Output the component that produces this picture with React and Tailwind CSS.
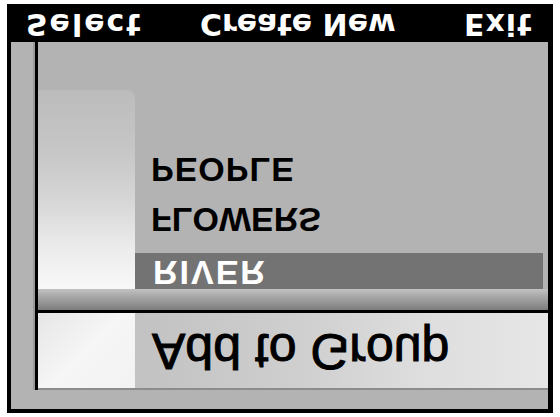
export default function App() {
  const flip = "[transform:scaleY(-1)] inline-block leading-none";
  return (
    <div className="w-[560px] h-[417px] bg-white py-[4px] px-[7px]">
      <div className="w-full h-full bg-black flex flex-col pl-[4px] pr-[5px] pb-[4px]">
        {/* soft key bar */}
        <div className="h-[38px] flex items-center text-white font-bold text-[30px] font-['DejaVu_Sans',sans-serif]">
          <div className="w-[180px] pl-[15px]">
            <span className={`${flip} tracking-[2px]`}>Select</span>
          </div>
          <div className="w-[260px] pl-[9px]">
            <span className={flip}>Create New</span>
          </div>
          <div className="pl-[13px]">
            <span className={`${flip} tracking-[1px]`}>Exit</span>
          </div>
        </div>
        {/* interior */}
        <div className="flex-1 bg-[#b3b3b3] flex flex-col">
          <div className="flex h-[348px]">
            <div className="w-[22px] bg-[#b3b3b3]" />
            <div className="w-[2px] bg-[#9a9a9a]" />
            <div className="w-[3px] bg-black" />
            <div className="flex-1 flex flex-col">
              <div className="flex h-[247px]">
                <div className="w-[97px] pt-[48px]">
                  <div className="h-full rounded-tr-[8px] bg-[linear-gradient(180deg,#bcbcbc_0%,#c6c6c6_30%,#d6d6d6_55%,#ececec_80%,#f8f8f8_100%)]" />
                </div>
                <div className="flex-1 flex flex-col pt-[103px] pr-[5px] font-bold text-[34px] font-['Liberation_Sans',sans-serif]">
                  <div className="h-[50px] flex items-center pl-[16px] text-black">
                    <span className={`${flip} tracking-[1px]`}>PEOPLE</span>
                  </div>
                  <div className="h-[50px] flex items-center pl-[16px] text-black">
                    <span className={flip}>FLOWERS</span>
                  </div>
                  <div className="h-[36px] mt-[8px] flex items-center pl-[18px] bg-[#737373] text-white">
                    <span className={`${flip} tracking-[2px] pb-[3px]`}>RIVER</span>
                  </div>
                </div>
              </div>
              <div className="h-[21px] bg-[linear-gradient(180deg,#c2c2c2_0%,#a8a8a8_35%,#8e8e8e_75%,#7c7c7c_100%)]" />
              <div className="h-[3px] bg-black" />
              <div className="h-[75px] flex">
                <div className="w-[97px] bg-[linear-gradient(135deg,#e6e6e6_0%,#f6f6f6_50%,#f2f2f2_100%)]" />
                <div className="flex-1 flex items-center pl-[17px] bg-[linear-gradient(90deg,#c2c2c2_0%,#cfcfcf_40%,#dedede_70%,#e6e6e6_100%)] text-black text-[50px] font-['Liberation_Sans',sans-serif] [-webkit-text-stroke:1px_black]">
                  <span className={flip}>Add to Group</span>
                </div>
              </div>
              <div className="h-[2px] bg-[#8c8c8c]" />
            </div>
          </div>
          <div className="flex-1 bg-[#b3b3b3]" />
        </div>
      </div>
    </div>
  );
}
